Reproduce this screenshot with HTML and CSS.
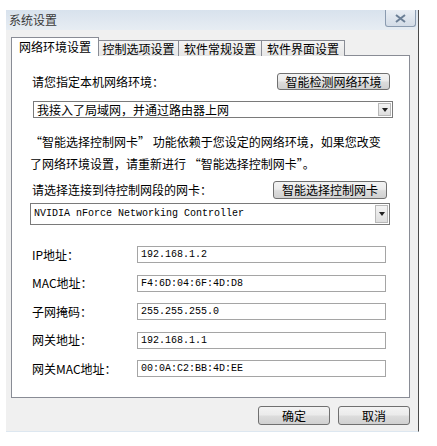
FILE: index.html
```html
<!DOCTYPE html>
<html>
<head>
<meta charset="utf-8">
<title>系统设置</title>
<link rel="stylesheet" href="styles.css">
</head>
<body>
<div class="window">
  <div class="titlebar">
    <span class="title">系统设置</span>
    <span class="close">
      <svg width="13" height="9" viewBox="0 0 13 9"><path d="M2 1 L11 8 M11 1 L2 8" stroke="#6b7f96" stroke-width="2" fill="none"/></svg>
    </span>
  </div>

  <div class="tabs">
    <div class="tab active">网络环境设置</div>
    <div class="tab">控制选项设置</div>
    <div class="tab">软件常规设置</div>
    <div class="tab">软件界面设置</div>
  </div>

  <div class="panel">
    <div class="row row-env">
      <span class="label">请您指定本机网络环境：</span>
      <span class="btn btn-detect">智能检测网络环境</span>
    </div>
    <div class="combo combo-env">
      <span class="combo-text">我接入了局域网，并通过路由器上网</span>
      <span class="combo-arrow"></span>
    </div>

    <p class="note">“智能选择控制网卡” 功能依赖于您设定的网络环境，如果您改变<br>了网络环境设置，请重新进行 “智能选择控制网卡”。</p>

    <div class="row row-nic">
      <span class="label">请选择连接到待控制网段的网卡：</span>
      <span class="btn btn-select">智能选择控制网卡</span>
    </div>
    <div class="combo combo-nic">
      <span class="combo-text mono">NVIDIA nForce Networking Controller</span>
      <span class="combo-arrow"></span>
    </div>

    <div class="fields">
      <div class="field"><span class="field-label">IP地址：</span><span class="input">192.168.1.2</span></div>
      <div class="field"><span class="field-label">MAC地址：</span><span class="input">F4:6D:04:6F:4D:D8</span></div>
      <div class="field"><span class="field-label">子网掩码：</span><span class="input">255.255.255.0</span></div>
      <div class="field"><span class="field-label">网关地址：</span><span class="input">192.168.1.1</span></div>
      <div class="field"><span class="field-label">网关MAC地址：</span><span class="input">00:0A:C2:BB:4D:EE</span></div>
    </div>
  </div>

  <div class="footer">
    <span class="btn btn-dlg">确定</span>
    <span class="btn btn-dlg">取消</span>
  </div>
</div>
</body>
</html>
```

FILE: styles.css
```css
/* System settings dialog */

body
{ margin: 0;
background: #ffffff;
font-family: "Noto Sans CJK SC", "Liberation Sans", sans-serif;
font-size: 12px;
color: #000000;
}

div.window
{ margin: 10px 0 0 6px;
width: 413px;
height: 422px;
box-sizing: border-box;
background: #f0f0f0;
border-right: 1px solid #4a4a4a;
border-bottom: 1px solid #dde7f0;
padding: 0 0 0 5px;
display: flex;
flex-direction: column;
}

/* Title bar */

div.titlebar
{ margin-left: -5px;
height: 20px;
background: linear-gradient(#d8e2ed, #e7edf3);
display: flex;
align-items: flex-start;
justify-content: space-between;
}

span.title
{ padding: 3px 0 0 3px;
line-height: 14px;
color: #3a3a3a;
}

span.close
{ width: 31px;
height: 17px;
box-sizing: border-box;
margin-right: 2px;
border: 1px solid #8a9bb0;
border-top: none;
border-radius: 0 0 3px 3px;
background: linear-gradient(#e9eef4, #d3dce7);
display: flex;
align-items: center;
justify-content: center;
}

/* Tabs */

div.tabs
{ margin-top: 7px;
height: 19px;
display: flex;
align-items: flex-end;
position: relative;
z-index: 1;
}

div.tab
{ height: 16px;
box-sizing: border-box;
padding: 0;
border: 1px solid #898c95;
border-bottom: none;
border-left: none;
background: linear-gradient(#f4f4f4, #e6e6e6);
line-height: 15px;
white-space: nowrap;
text-align: center;
}

div.tab.active
{ width: 88px;
height: 19px;
padding-top: 1px;
border-left: 1px solid #898c95;
background: #ffffff;
line-height: 16px;
}

div.tab:nth-child(2)
{ width: 80px;
}

div.tab:nth-child(3), div.tab:nth-child(4)
{ width: 83px;
}

/* Panel */

div.panel
{ margin-top: -1px;
width: 399px;
height: 343px;
box-sizing: border-box;
background: #ffffff;
border: 1px solid #898c95;
padding: 17px 18px 0 20px;
}

div.row
{ display: flex;
justify-content: space-between;
align-items: center;
}

span.label
{ line-height: 14px;
}

span.btn
{ box-sizing: border-box;
border: 1px solid #707070;
border-radius: 3px;
background: linear-gradient(#f3f3f3 0%, #ebebeb 45%, #dcdcdc 55%, #d0d0d0 100%);
text-align: center;
line-height: 15px;
}

span.btn-detect
{ width: 113px;
height: 17px;
margin-right: 1px;
}

div.row-nic
{ margin-top: 6px;
}

span.btn-select
{ width: 114px;
height: 18px;
margin-right: 4px;
line-height: 16px;
}

div.combo
{ display: flex;
align-items: stretch;
box-sizing: border-box;
border: 1px solid #7a7a7a;
background: #ffffff;
}

div.combo-env
{ margin: 11px -2px 0 1px;
height: 17px;
}

div.combo-nic
{ margin: 4px 1px 0 -2px;
height: 22px;
}

span.combo-text
{ flex: 1;
padding-left: 3px;
line-height: 15px;
}

div.combo-nic span.combo-text
{ line-height: 20px;
}

span.mono
{ font-family: "Liberation Mono", monospace;
font-size: 10px;
}

span.combo-arrow
{ width: 13px;
margin: 1px;
box-sizing: border-box;
border: 1px solid #b8b8b8;
background: linear-gradient(#f4f4f4, #dedede);
display: flex;
align-items: center;
justify-content: center;
}

span.combo-arrow:after
{ content: "";
border-left: 3px solid transparent;
border-right: 3px solid transparent;
border-top: 4px solid #202020;
}

p.note
{ margin: 13px 0 0 -2px;
line-height: 22px;
}

/* Address fields */

div.fields
{ margin-top: 21px;
display: flex;
flex-direction: column;
gap: 11.5px;
}

div.field
{ display: flex;
align-items: center;
height: 17px;
}

span.field-label
{ width: 105px;
line-height: 14px;
}

span.input
{ width: 249px;
height: 17px;
box-sizing: border-box;
border: 1px solid #a5a5a5;
padding-left: 3px;
font-family: "Liberation Mono", monospace;
font-size: 10px;
line-height: 15px;
}

/* Dialog buttons */

div.footer
{ margin-top: 8px;
width: 399px;
display: flex;
justify-content: flex-end;
gap: 8px;
}

span.btn-dlg
{ width: 72px;
height: 19px;
line-height: 17px;
}
```
